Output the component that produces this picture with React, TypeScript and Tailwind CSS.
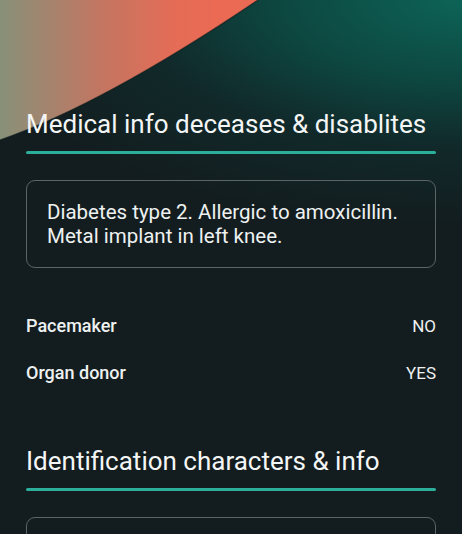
import React from 'react';

const Heading: React.FC<{ title: string; first?: boolean }> = ({ title, first }) => (
  <div className={first ? 'pt-[108px]' : 'pt-[60px]'}>
    <h2 className="text-[26px] leading-[32px] font-normal text-[#f4f6f6] whitespace-nowrap">{title}</h2>
    <div className="mt-[11px] h-[3px] rounded-full bg-[#2bae9a]" />
  </div>
);

const InfoBox: React.FC<{ children?: React.ReactNode }> = ({ children }) => (
  <div className="mt-[26px] rounded-[9px] border border-[#5b6567] px-5 py-[19px] min-h-[88px]">
    <p className="text-[20.5px] leading-[24px] text-[#eef1f1]">{children}</p>
  </div>
);

const Row: React.FC<{ label: string; value: string; className?: string }> = ({ label, value, className }) => (
  <div className={`flex items-center justify-between leading-[24px] ${className ?? ''}`}>
    <span className="text-[18px] font-medium text-[#eef1f1]">{label}</span>
    <span className="text-[17px] text-[#eef1f1]">{value}</span>
  </div>
);

export default function App() {
  return (
    <div className="relative min-h-screen overflow-hidden bg-[#131d1f] font-['Roboto',sans-serif]">
      {/* teal glow at the top */}
      <div className="absolute inset-x-0 top-0 h-[300px] bg-[radial-gradient(ellipse_110%_75%_at_100%_0%,#0d6357_0%,#0d4841_35%,#11292a_65%,#131d1f_100%)]" />

      {/* coral swoosh */}
      <svg className="absolute left-0 top-0" width="462" height="160" viewBox="0 0 462 160">
        <defs>
          <linearGradient id="coral" x1="0" y1="0" x2="220" y2="0" gradientUnits="userSpaceOnUse">
            <stop offset="0" stopColor="#889179" />
            <stop offset="0.45" stopColor="#c27662" />
            <stop offset="0.8" stopColor="#e56c56" />
            <stop offset="1" stopColor="#eb6a54" />
          </linearGradient>
        </defs>
        <path d="M0 0 L258 0 Q104 104 0 140 Z" fill="url(#coral)" />
        <path d="M258 0 Q104 104 0 140" fill="none" stroke="#0b1c1b" strokeOpacity="0.55" strokeWidth="1.5" />
      </svg>

      <div className="relative px-[26px] pb-10">
        <Heading title="Medical info deceases & disablites" first />
        <InfoBox>
          Diabetes type 2. Allergic to amoxicillin.
          <br />
          Metal implant in left knee.
        </InfoBox>

        <Row label="Pacemaker" value="NO" className="mt-[46px]" />
        <Row label="Organ donor" value="YES" className="mt-[23px]" />

        <Heading title="Identification characters & info" />
        <InfoBox>
          <br />
          <br />
        </InfoBox>
      </div>
    </div>
  );
}
